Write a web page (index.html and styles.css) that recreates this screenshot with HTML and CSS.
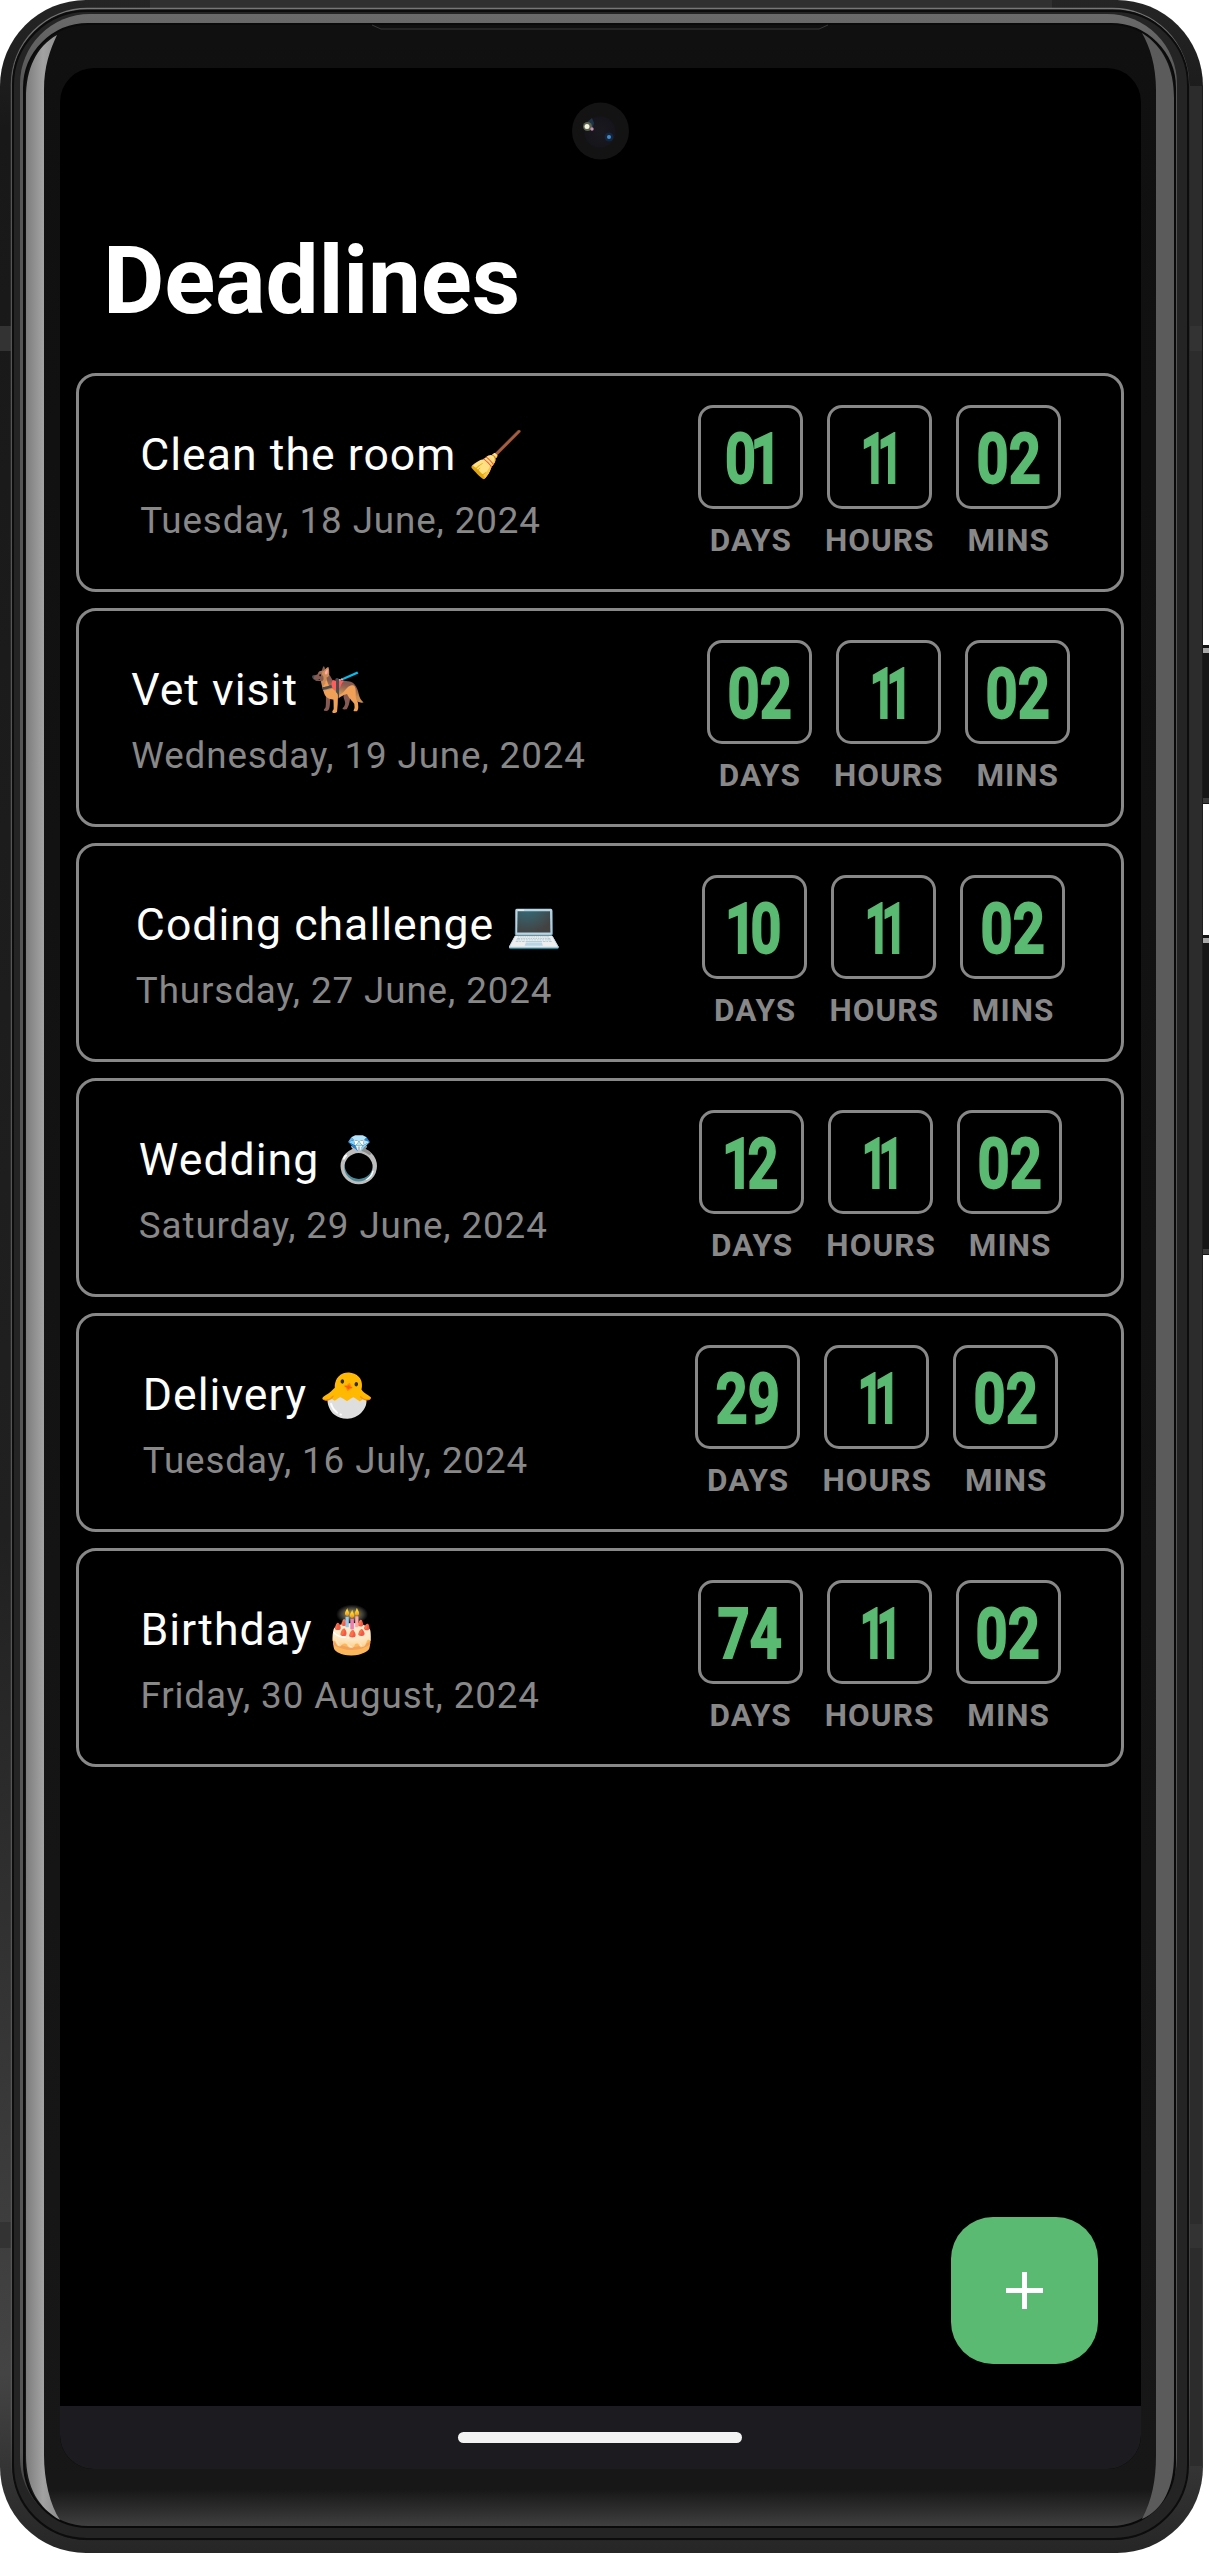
FILE: index.html
```html
<!DOCTYPE html>
<html lang="en">
<head>
<meta charset="utf-8">
<title>Deadlines</title>
<link rel="stylesheet" href="styles.css">
</head>
<body>
<div class="phone">
  <svg class="frame" viewBox="0 0 1209 2553" aria-hidden="true">
    <defs>
      <linearGradient id="body" x1="0" y1="0" x2="0" y2="1"><stop offset="0" stop-color="#252525"/><stop offset=".05" stop-color="#181818"/><stop offset=".6" stop-color="#202020"/><stop offset=".93" stop-color="#444"/><stop offset="1" stop-color="#262626"/></linearGradient>
      <linearGradient id="rim" x1="0" y1="0" x2="0" y2="1"><stop offset="0" stop-color="#777"/><stop offset=".03" stop-color="#555"/><stop offset=".95" stop-color="#555"/><stop offset="1" stop-color="#1a1a1a"/></linearGradient>
      <linearGradient id="inner" x1="0" y1="0" x2="0" y2="1"><stop offset="0" stop-color="#6a6a6a"/><stop offset=".03" stop-color="#555"/><stop offset=".97" stop-color="#555"/><stop offset="1" stop-color="#2a2a2a"/></linearGradient>
      <linearGradient id="glass" gradientUnits="userSpaceOnUse" x1="0" y1="25" x2="0" y2="2527"><stop offset="0" stop-color="#101010"/><stop offset=".5" stop-color="#131313"/><stop offset=".985" stop-color="#171717"/><stop offset="1" stop-color="#404040"/></linearGradient>
      <linearGradient id="glareL" x1="0" y1="0" x2="1" y2="0"><stop offset="0" stop-color="#7c7c7c"/><stop offset=".5" stop-color="#a2a2a2"/><stop offset="1" stop-color="#8c8c8c"/></linearGradient>
      <radialGradient id="lens"><stop offset="0" stop-color="#19191f"/><stop offset="1" stop-color="#15151b"/></radialGradient>
    </defs>
    <path fill="#161616" d="M1200 645h9v159h-9zM1200 935h9v320h-9z"/>
    <path fill="#aaa" d="M1203 648h6v5h-6zM1203 938h6v5h-6z"/>
    <path fill="#3a3a3a" d="M1201 798h8v5h-8zM1201 1249h8v5h-8z"/>
    <rect x="0" y="0" width="1203" height="2553" rx="86" fill="url(#body)"/>
    <path fill="#303030" d="M150 0h902v9h-902z"/>
    <path fill="#2c2c2c" d="M1190 86h12v2380h-12z"/>
    <path fill="#333" d="M0 326h12v25h-12zM0 2222h11v26h-11zM1190 326h12v25h-12zM1190 2224h12v24h-12z"/>
    <rect x="11.5" y="8.5" width="1177" height="2531" rx="76" fill="#181818" stroke="url(#rim)" stroke-width="1.5"/>
    <rect x="13" y="11" width="1175" height="2528" rx="74" fill="#242424" stroke="#0c0c0c" stroke-width="2"/>
    <rect x="20" y="14" width="1157" height="2514" rx="70" fill="url(#inner)"/>
    <rect x="24" y="24" width="1151" height="2503" rx="64" fill="url(#glass)" stroke="#0a0a0a" stroke-width="2"/>
    <path fill="url(#glareL)" d="M57 35C36 47 26 69 26 98V2455C26 2488 39 2508 60 2520C50 2505 44 2480 44 2455V90C44 66 50 50 57 35Z"/>
    <path fill="#5b5b5b" d="M1142 33C1164 47 1174 69 1174 98V2455C1174 2488 1163 2510 1142 2519C1152 2500 1156 2480 1156 2455V90C1156 66 1150 47 1142 33Z"/>
    <path fill="none" stroke="#383838" stroke-width="1" d="M372 25l9 4h438l9-4"/>
    <rect x="60" y="68" width="1081" height="2401" rx="34" fill="#000"/>
    <circle cx="600.5" cy="131" r="28.5" fill="#131313"/>
    <circle cx="600" cy="132" r="15.5" fill="url(#lens)"/>
    <path d="M586 123l6-5 2 5-2 8z" fill="#1f3348"/>
    <circle cx="587.500" cy="126.500" r="4.500" fill="#59604e"/><circle cx="587" cy="126.500" r="2.500" fill="#f2f4dd"/>
    <circle cx="592" cy="129" r="1.700" fill="#c78fb0"/>
    <circle cx="609" cy="137" r="4.500" fill="#16253a"/><circle cx="609" cy="137" r="2" fill="#3b8fd0"/>
  </svg>
  <main class="screen">
    <h1 class="heading">Deadlines</h1>
    <ul class="list">
      <li class="card">
        <div class="info"><h2 class="title">Clean the room <span class="emoji">🧹</span></h2><p class="date">Tuesday, 18 June, 2024</p></div>
        <span></span>
        <div class="counts">
          <div class="unit"><b class="num"><span class="digits one">01</span></b><span class="label">DAYS</span></div>
          <div class="unit"><b class="num"><span class="digits ones">11</span></b><span class="label">HOURS</span></div>
          <div class="unit"><b class="num"><span class="digits">02</span></b><span class="label">MINS</span></div>
        </div>
      </li>
      <li class="card">
        <div class="info"><h2 class="title">Vet visit <span class="emoji">🐕‍🦺</span></h2><p class="date">Wednesday, 19 June, 2024</p></div>
        <span></span>
        <div class="counts">
          <div class="unit"><b class="num"><span class="digits">02</span></b><span class="label">DAYS</span></div>
          <div class="unit"><b class="num"><span class="digits ones">11</span></b><span class="label">HOURS</span></div>
          <div class="unit"><b class="num"><span class="digits">02</span></b><span class="label">MINS</span></div>
        </div>
      </li>
      <li class="card">
        <div class="info"><h2 class="title">Coding challenge <span class="emoji">💻</span></h2><p class="date">Thursday, 27 June, 2024</p></div>
        <span></span>
        <div class="counts">
          <div class="unit"><b class="num"><span class="digits lead">10</span></b><span class="label">DAYS</span></div>
          <div class="unit"><b class="num"><span class="digits ones">11</span></b><span class="label">HOURS</span></div>
          <div class="unit"><b class="num"><span class="digits">02</span></b><span class="label">MINS</span></div>
        </div>
      </li>
      <li class="card">
        <div class="info"><h2 class="title">Wedding <span class="emoji">💍</span></h2><p class="date">Saturday, 29 June, 2024</p></div>
        <span></span>
        <div class="counts">
          <div class="unit"><b class="num"><span class="digits lead">12</span></b><span class="label">DAYS</span></div>
          <div class="unit"><b class="num"><span class="digits ones">11</span></b><span class="label">HOURS</span></div>
          <div class="unit"><b class="num"><span class="digits">02</span></b><span class="label">MINS</span></div>
        </div>
      </li>
      <li class="card">
        <div class="info"><h2 class="title">Delivery <span class="emoji">🐣</span></h2><p class="date">Tuesday, 16 July, 2024</p></div>
        <span></span>
        <div class="counts">
          <div class="unit"><b class="num"><span class="digits">29</span></b><span class="label">DAYS</span></div>
          <div class="unit"><b class="num"><span class="digits ones">11</span></b><span class="label">HOURS</span></div>
          <div class="unit"><b class="num"><span class="digits">02</span></b><span class="label">MINS</span></div>
        </div>
      </li>
      <li class="card">
        <div class="info"><h2 class="title">Birthday <span class="emoji">🎂</span></h2><p class="date">Friday, 30 August, 2024</p></div>
        <span></span>
        <div class="counts">
          <div class="unit"><b class="num"><span class="digits">74</span></b><span class="label">DAYS</span></div>
          <div class="unit"><b class="num"><span class="digits ones">11</span></b><span class="label">HOURS</span></div>
          <div class="unit"><b class="num"><span class="digits">02</span></b><span class="label">MINS</span></div>
        </div>
      </li>
    </ul>
    <button class="fab" aria-label="Add deadline"><svg width="37" height="37" viewBox="0 0 37 37"><path fill="#fff" d="M16 0h5v16h16v5H21v16h-5V21H0v-5h16z"/></svg></button>
    <div class="nav"><span class="pill"></span></div>
  </main>
</div>
</body>
</html>
```
FILE: styles.css
```css
* { box-sizing: border-box; margin: 0; padding: 0; }
body { background: #fff; font-family: Roboto, sans-serif; }
.phone { position: relative; width: 1209px; height: 2553px; padding: 68px 68px 84px 60px; overflow: hidden; }
.frame { position: absolute; left: 0; top: 0; width: 1209px; height: 2553px; }
.screen { position: relative; height: 2401px; display: flex; flex-direction: column; border-radius: 0 0 34px 34px; overflow: hidden; }
.heading { padding: 155px 0 0 43px; height: 305px; font-size: 94.5px; line-height: 116px; font-weight: 700; letter-spacing: -0.2px; color: #fff; }
.list { list-style: none; display: flex; flex-direction: column; gap: 16px; padding: 0 17px 0 16px; }
.card { height: 219px; border: 3px solid #888; border-radius: 20px; padding: 0 21px; display: flex; justify-content: space-around; }
.info { padding: 49px 0 0 1px; display: flex; flex-direction: column; gap: 15px; white-space: nowrap; }
.title { height: 60px; font-size: 44.6px; line-height: 60px; font-weight: 400; letter-spacing: 1.02px; color: #fff; }
.emoji { font-family: "Noto Color Emoji", Roboto, sans-serif; }
.date { font-size: 36.75px; line-height: 42px; letter-spacing: 0.9px; color: #888; }
.counts { padding-top: 29px; display: flex; gap: 24px; }
.unit { width: 105px; display: flex; flex-direction: column; align-items: center; gap: 13px; }
.num { width: 105px; height: 104px; border: 3px solid #888; border-radius: 15px; display: flex; align-items: center; justify-content: center; font: 700 71px/98px Roboto, sans-serif; color: #5aba72; }
/* Condensed numerals; the right padding offsets the trailing letter-spacing */
.digits { transform: translateY(2px) scaleX(0.79); -webkit-text-stroke: 1.8px #5aba72; }
.one { letter-spacing: -7px; padding-right: 7px; transform: translate(3px, 2px) scaleX(0.76); }
.lead { letter-spacing: -7px; padding-right: 7px; transform: translate(-1px, 2px) scaleX(0.76); }
.ones { letter-spacing: -14px; padding-right: 14px; transform: translate(2px, 2px) scaleX(0.62); }
.label { font-size: 31.5px; line-height: 38px; font-weight: 700; letter-spacing: 1.05px; padding-left: 1px; color: #888; }
.fab { align-self: flex-end; margin: auto 43px 42px 0; width: 147px; height: 147px; border: 0; border-radius: 42px; background: #5aba72; display: flex; align-items: center; justify-content: center; }
.nav { height: 63px; background: #1c1b20; display: flex; justify-content: center; padding: 26px 2px 0 0; }
.pill { width: 284px; height: 11px; border-radius: 6px; background: #f3f3f3; }
```
